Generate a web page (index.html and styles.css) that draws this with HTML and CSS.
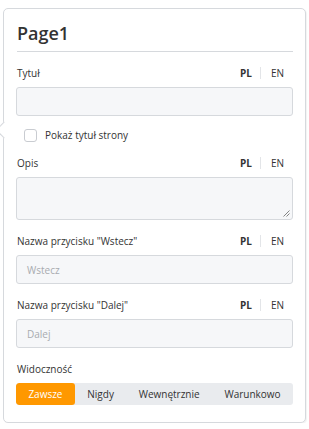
FILE: index.html
```html
<!DOCTYPE html>
<html lang="pl">
<head>
<meta charset="utf-8">
<link rel="stylesheet" href="styles.css">
</head>
<body>
<div class="card">
  <h1 class="title">Page1</h1>
  <div class="rule"></div>

  <div class="field">
    <div class="field-head">
      <span class="label">Tytuł</span>
      <span class="langs"><span class="lang active">PL</span><span class="sep"></span><span class="lang">EN</span></span>
    </div>
    <div class="input"></div>
  </div>

  <label class="check">
    <span class="box"></span>
    <span class="check-text">Pokaż tytuł strony</span>
  </label>

  <div class="field">
    <div class="field-head">
      <span class="label">Opis</span>
      <span class="langs"><span class="lang active">PL</span><span class="sep"></span><span class="lang">EN</span></span>
    </div>
    <div class="input textarea">
      <svg class="grip" width="7" height="7" viewBox="0 0 7 7"><path d="M6.5 0.5 L0.5 6.5 M6.5 3.5 L3.5 6.5" stroke="#666" stroke-width="0.8" fill="none"/></svg>
    </div>
  </div>

  <div class="field">
    <div class="field-head">
      <span class="label">Nazwa przycisku "Wstecz"</span>
      <span class="langs"><span class="lang active">PL</span><span class="sep"></span><span class="lang">EN</span></span>
    </div>
    <div class="input"><span class="placeholder">Wstecz</span></div>
  </div>

  <div class="field">
    <div class="field-head">
      <span class="label">Nazwa przycisku "Dalej"</span>
      <span class="langs"><span class="lang active">PL</span><span class="sep"></span><span class="lang">EN</span></span>
    </div>
    <div class="input"><span class="placeholder">Dalej</span></div>
  </div>

  <div class="field last">
    <div class="field-head">
      <span class="label">Widoczność</span>
    </div>
    <div class="segmented">
      <span class="seg on">Zawsze</span>
      <span class="seg">Nigdy</span>
      <span class="seg">Wewnętrznie</span>
      <span class="seg">Warunkowo</span>
    </div>
  </div>
</div>
</body>
</html>
```

FILE: styles.css
```css
* { box-sizing: border-box; }
html, body { margin: 0; padding: 0; background: #fff; }
body {
  font-family: "Open Sans", "Noto Sans", sans-serif;
  color: #333;
  padding: 8px 4px 0 3px;
}
.card {
  position: relative;
  width: 303px;
  height: 415px;
  border: 1px solid #d6d9dd;
  border-radius: 5px;
  background: #fff;
  padding: 12px 12px 0 12px;
  box-shadow: 1px 1px 1px rgba(0,0,0,0.05);
}
.card::before {
  content: "";
  position: absolute;
  left: -6px;
  top: 115px;
  width: 11px;
  height: 11px;
  background: #fff;
  border-left: 1px solid #d6d9dd;
  border-bottom: 1px solid #d6d9dd;
  transform: rotate(45deg);
}
.title {
  margin: 0;
  padding-left: 1px;
  font-size: 18px;
  font-weight: 600;
  line-height: 24px;
  color: #333;
}
.rule {
  height: 1px;
  background: #d6d9dd;
  margin: 6px 0 0 1px;
}
.field { margin-top: 13px; }
.field:first-of-type { margin-top: 14px; }
.field-head {
  display: flex;
  justify-content: space-between;
  align-items: center;
  height: 16px;
  margin-bottom: 6px;
}
.label { font-size: 10px; color: #333; padding-left: 1px; }
.langs { display: flex; align-items: center; padding-right: 9px; }
.lang { font-size: 10px; color: #333; }
.lang.active { font-weight: 700; }
.sep { width: 1px; height: 12px; background: #e3e5e8; margin: 0 10px 0 8px; }
.input {
  position: relative;
  height: 29px;
  background: #f6f7f9;
  border: 1px solid #d6d9dd;
  border-radius: 3px;
  display: flex;
  align-items: center;
  padding-left: 10px;
}
.textarea { height: 43px; }
.grip { position: absolute; right: 2px; bottom: 2px; }
.placeholder { font-size: 10px; color: #a8abb0; }
.check {
  display: flex;
  align-items: center;
  margin: 12px 0 0 8px;
  height: 14px;
}
.box {
  width: 13px; height: 13px;
  border: 1px solid #c9ccd1;
  border-radius: 3px;
  background: #fff;
  margin-right: 8px;
}
.check-text { font-size: 10px; color: #333; }
.segmented {
  display: flex;
  height: 22px;
  background: #e9ebee;
  border-radius: 3px;
  overflow: hidden;
}
.seg {
  flex: 1 1 auto;
  display: flex;
  align-items: center;
  justify-content: center;
  font-size: 10px;
  color: #333;
}
.seg.on { background: #ff9800; color: #fff; border-radius: 3px; }
```
